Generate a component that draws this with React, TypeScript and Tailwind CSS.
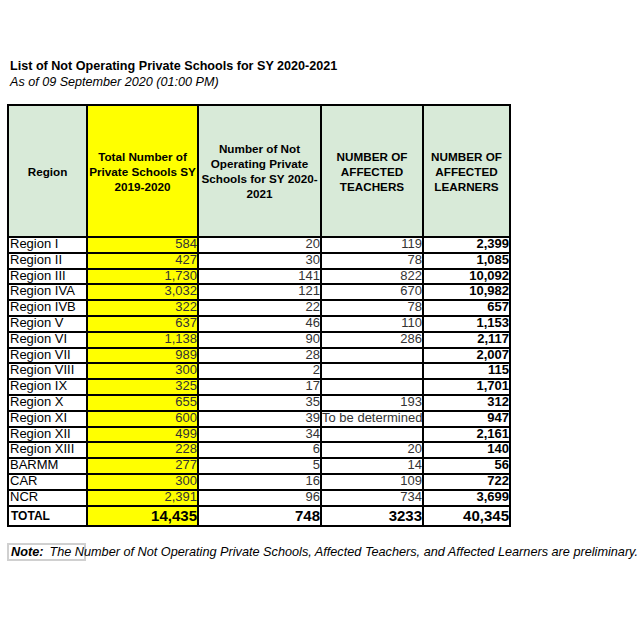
const rows: [string, string, string, string, string][] = [
  ["Region I", "584", "20", "119", "2,399"],
  ["Region II", "427", "30", "78", "1,085"],
  ["Region III", "1,730", "141", "822", "10,092"],
  ["Region IVA", "3,032", "121", "670", "10,982"],
  ["Region IVB", "322", "22", "78", "657"],
  ["Region V", "637", "46", "110", "1,153"],
  ["Region VI", "1,138", "90", "286", "2,117"],
  ["Region VII", "989", "28", "", "2,007"],
  ["Region VIII", "300", "2", "", "115"],
  ["Region IX", "325", "17", "", "1,701"],
  ["Region X", "655", "35", "193", "312"],
  ["Region XI", "600", "39", "To be determined", "947"],
  ["Region XII", "499", "34", "", "2,161"],
  ["Region XIII", "228", "6", "20", "140"],
  ["BARMM", "277", "5", "14", "56"],
  ["CAR", "300", "16", "109", "722"],
  ["NCR", "2,391", "96", "734", "3,699"],
];

const cell = "border-2 border-black p-0 h-[15.8px] align-top leading-[11px] text-[13px] whitespace-nowrap";
const totalCell = "border-2 border-black p-0 text-right text-[15px] font-bold leading-[15px]";

export default function App() {
  return (
    <div className="w-[644px] h-[644px] bg-white font-['Liberation_Sans',Arial,sans-serif] text-black">
      <div className="pt-[58px] pl-[10px]">
        <h1 className="text-[12.6px] font-bold leading-[16px]">
          List of Not Operating Private Schools for SY 2020-2021
        </h1>
        <p className="text-[12.6px] italic leading-[16px]">As of 09 September 2020 (01:00 PM)</p>
      </div>

      <table className="ml-[7px] mt-[14px] table-fixed border-collapse w-[502px]">
        <colgroup>
          <col className="w-[79px]" />
          <col className="w-[111px]" />
          <col className="w-[123px]" />
          <col className="w-[102px]" />
          <col className="w-[87px]" />
        </colgroup>
        <thead>
          <tr className="h-[132px] text-[11.7px] font-bold leading-[15px] text-center whitespace-nowrap">
            <th className="border-2 border-black bg-[#d8ead8]">Region</th>
            <th className="border-2 border-black bg-[#ffff00] p-0">
              Total Number of
              <br />
              Private Schools SY
              <br />
              2019-2020
            </th>
            <th className="border-2 border-black bg-[#d8ead8] p-0">
              Number of Not
              <br />
              Operating Private
              <br />
              Schools for SY 2020-
              <br />
              2021
            </th>
            <th className="border-2 border-black bg-[#d8ead8] p-0">
              NUMBER OF
              <br />
              AFFECTED
              <br />
              TEACHERS
            </th>
            <th className="border-2 border-black bg-[#d8ead8] p-0">
              NUMBER OF
              <br />
              AFFECTED
              <br />
              LEARNERS
            </th>
          </tr>
        </thead>
        <tbody>
          {rows.map((r) => (
            <tr key={r[0]}>
              <td className={`${cell} pl-[1px]`}>{r[0]}</td>
              <td className={`${cell} bg-[#ffff00] text-right text-[#333]`}>{r[1]}</td>
              <td className={`${cell} text-right text-[#333]`}>{r[2]}</td>
              <td className={`${cell} text-right text-[#333] ${r[3].length > 6 ? "text-[11.5px]" : ""}`}>{r[3]}</td>
              <td className={`${cell} text-right font-bold`}>{r[4]}</td>
            </tr>
          ))}
          <tr className="h-[19px]">
            <td className="border-2 border-black p-0 pl-[2px] text-[12px] font-bold">TOTAL</td>
            <td className={`${totalCell} bg-[#ffff00]`}>14,435</td>
            <td className={totalCell}>748</td>
            <td className={totalCell}>3233</td>
            <td className={totalCell}>40,345</td>
          </tr>
        </tbody>
      </table>

      <div className="mt-[16px] ml-[7px] w-[79px] h-[18px] border-2 border-[#d0d0d0] pl-[2px] text-[12.7px] italic leading-[14px] whitespace-nowrap">
        <b>Note:</b>
        <span className="ml-[6px]">
          The Number of Not Operating Private Schools, Affected Teachers, and Affected Learners are preliminary.
        </span>
      </div>
    </div>
  );
}
